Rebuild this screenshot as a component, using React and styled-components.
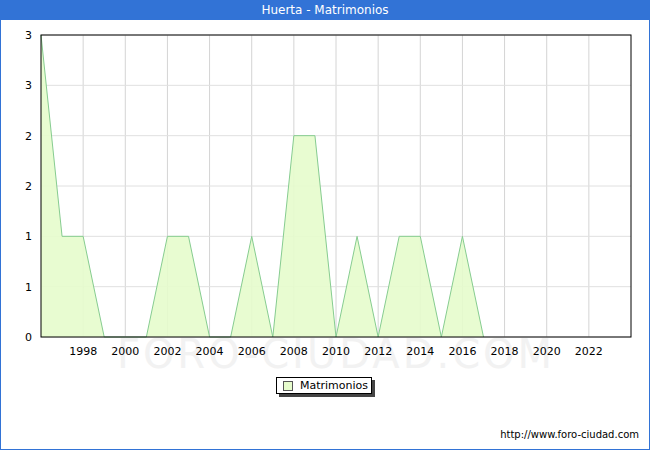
import React from "react";
import styled, { createGlobalStyle } from "styled-components";

const G = createGlobalStyle`
  html,body{margin:0;padding:0;background:#fff;}
  body{font-family:"DejaVu Sans",sans-serif;}
`;
const Frame = styled.div`
  width:650px;height:450px;box-sizing:border-box;border:1px solid #3273d6;border-top:none;
  display:flex;flex-direction:column;background:#fff;
`;
const Title = styled.div`
  height:20px;background:#3273d6;color:#fff;font-size:12px;
  display:flex;align-items:center;justify-content:center;
`;
const Body = styled.div`flex:1;display:flex;flex-direction:column;position:relative;`;
const Legend = styled.div`
  position:absolute;left:275px;top:357px;width:96px;height:17px;border:1px solid #000;
  box-shadow:3px 3px 0 #444;background:#fff;font-size:11px;display:flex;align-items:center;gap:7px;
  box-sizing:border-box;padding-left:6px;
`;
const Swatch = styled.span`width:8px;height:8px;border:1px solid #555;background:#e6fccc;`;
const Url = styled.div`
  position:absolute;right:10px;bottom:9px;font-size:10px;color:#000;
`;

const data=[3,1,1,0,0,0,1,1,0,0,1,0,2,2,0,1,0,1,1,0,1,0];
const X0=40,X1=630,Y0=15,Y1=317;
const xs=y=>X0+(y-1996)*(X1-X0)/28;
const ys=v=>Y1-v*(Y1-Y0)/3;

export default function App(){
  const pts=data.map((v,i)=>`${xs(1996+i)},${ys(v)}`).join(" ");
  const area=`${xs(1996)},${Y1} ${pts} ${xs(2017)},${Y1}`;
  const years=[];for(let y=1998;y<=2022;y+=2)years.push(y);
  const hl=[0,0.5,1,1.5,2,2.5,3];
  const lbl=["0","1","1","2","2","3","3"];
  return(<><G/><Frame><Title>Huerta - Matrimonios</Title><Body>
    <svg width="648" height="429" style={{display:"block"}}>
      <text x="335" y="348" textAnchor="middle" fontSize="40" fill="#f2f2f2" fontFamily="DejaVu Sans" letterSpacing="3">FORO-CIUDAD.COM</text>
      {years.map(y=><line key={y} x1={xs(y)} x2={xs(y)} y1={Y0} y2={Y1} stroke="#d4d4d4"/>)}
      {hl.map(h=><line key={h} x1={X0} x2={X1} y1={ys(h)} y2={ys(h)} stroke="#e0e0e0"/>)}
      <polygon points={area} fill="#e6fccc" fillOpacity="0.9"/>
      <polyline points={pts} fill="none" stroke="#86cc90" strokeWidth="1"/>
      <rect x={X0} y={Y0} width={X1-X0} height={Y1-Y0} fill="none" stroke="#000"/>
      {hl.map((h,i)=><text key={h} x="31" y={ys(h)+4} textAnchor="end" fontSize="11" fontFamily="DejaVu Sans">{lbl[i]}</text>)}
      {years.map(y=><text key={y} x={xs(y)} y="335" textAnchor="middle" fontSize="11" fontFamily="DejaVu Sans">{y}</text>)}
    </svg>
    <Legend><Swatch/>Matrimonios</Legend>
    <Url>http://www.foro-ciudad.com</Url>
  </Body></Frame></>);
}
